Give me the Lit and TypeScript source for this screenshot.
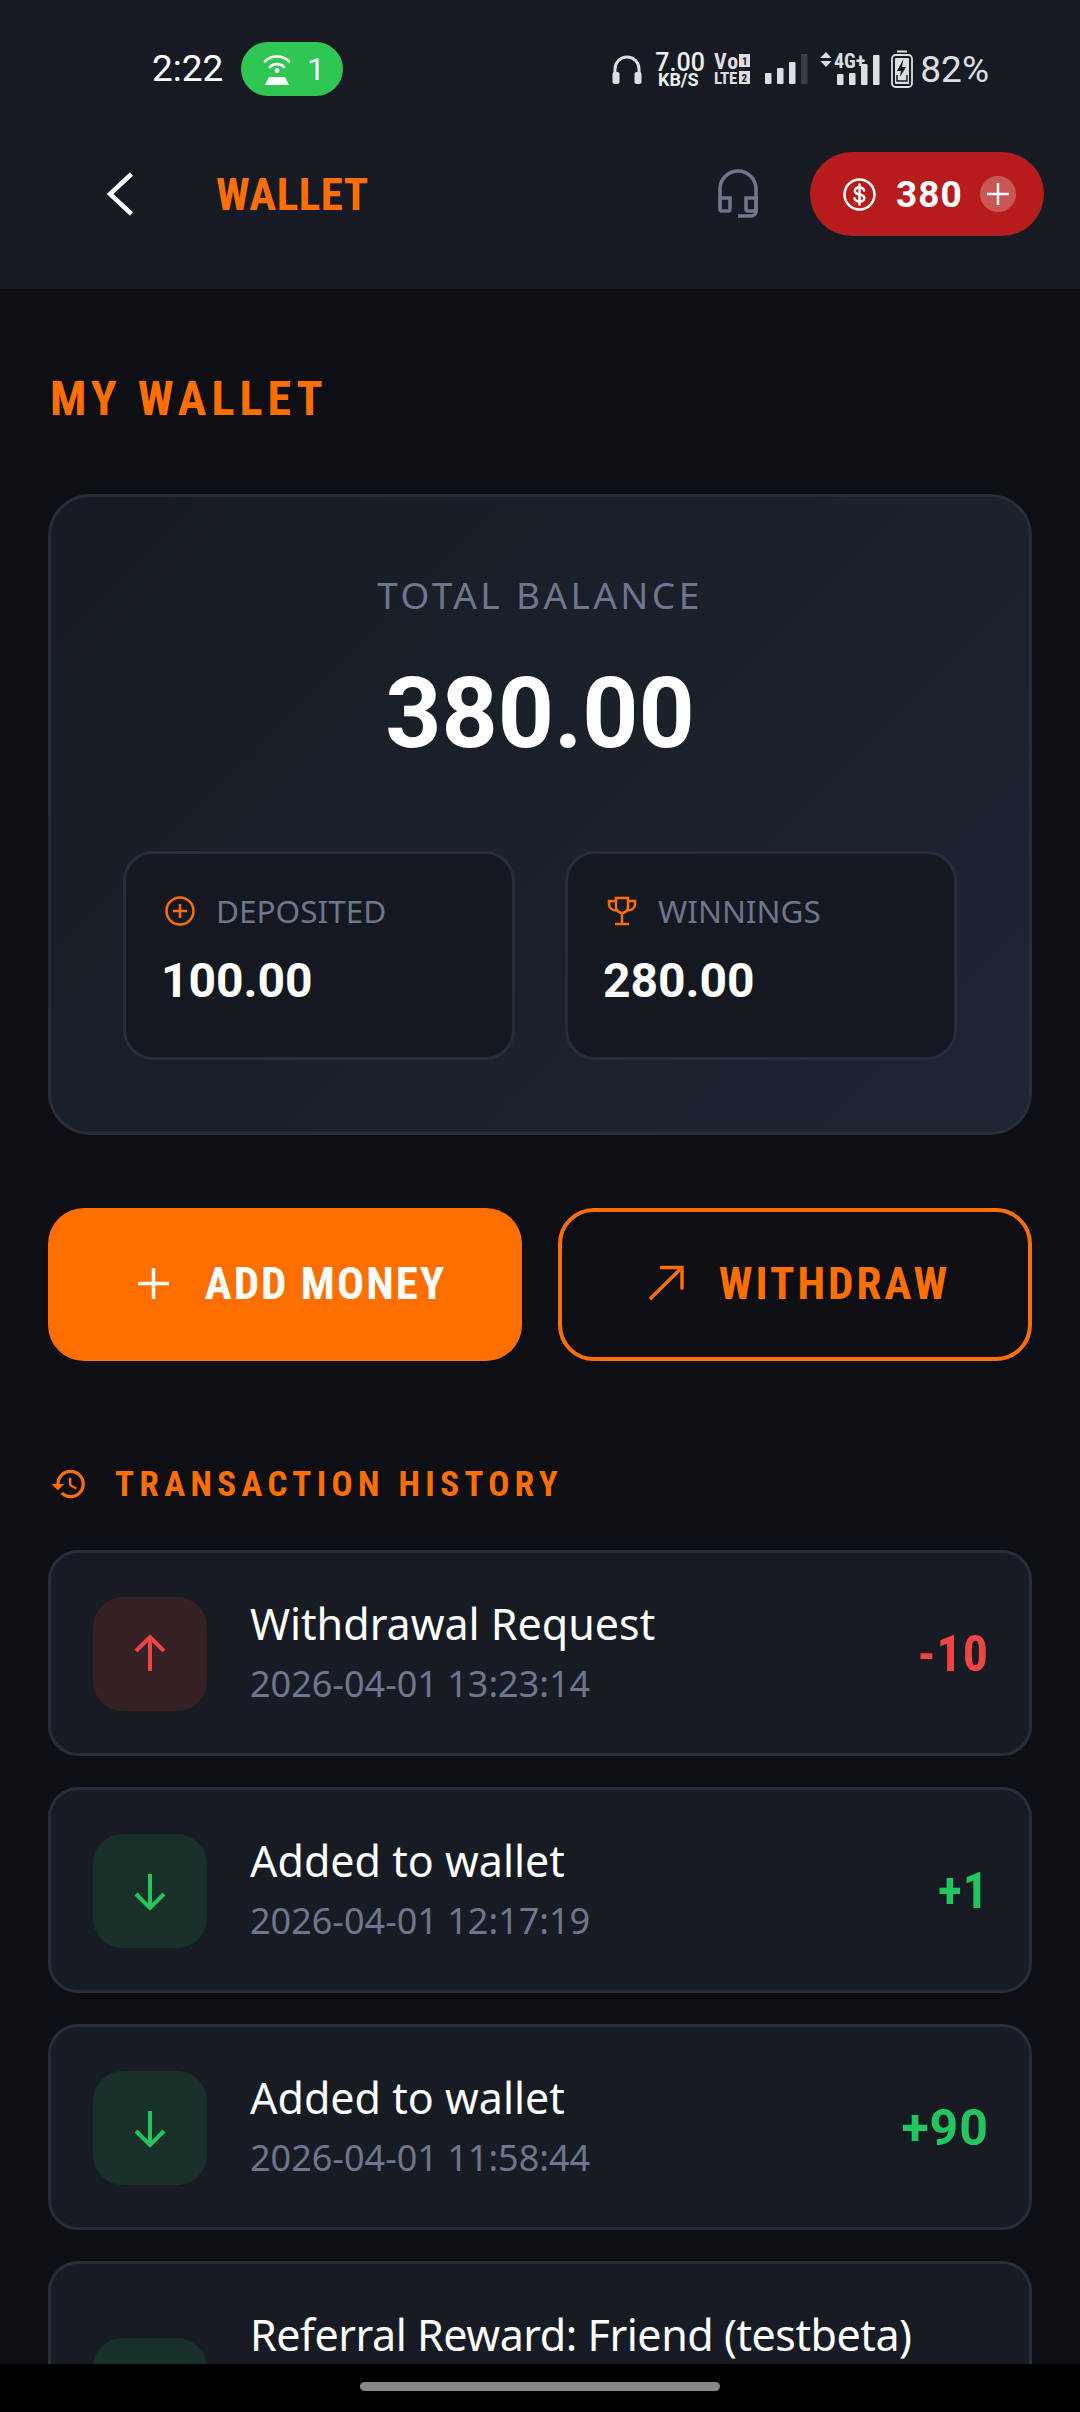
import { LitElement, css, html, svg } from "lit";
import { customElement } from "lit/decorators.js";

type Tx = { title: string; date: string; amount: string; kind: "in" | "out"; tight?: boolean; tall?: boolean };

const transactions: Tx[] = [
  { title: "Withdrawal Request", date: "2026-04-01 13:23:14", amount: "-10", kind: "out", tight: true },
  { title: "Added to wallet", date: "2026-04-01 12:17:19", amount: "+1", kind: "in", tight: true },
  { title: "Added to wallet", date: "2026-04-01 11:58:44", amount: "+90", kind: "in" },
  { title: "Referral Reward: Friend (testbeta)", date: "2026-04-01 11:40:02", amount: "+50", kind: "in", tall: true },
];

const bars = (list: [number, number, string?][]) =>
  list.map(([x, top, fill]) => svg`<rect x=${x} y=${top} width="6.5" height=${30 - top} rx="1" fill=${fill ?? "#dcdee0"}></rect>`);

@customElement("app-root")
export class AppRoot extends LitElement {
  static styles = css`
    :host {
      display: block;
      width: 1080px;
      height: 2412px;
      overflow: hidden;
      background: #0d0f13;
      color: #fff;
      font-family: "Noto Sans", sans-serif;
    }
    .page {
      height: 2412px;
      display: flex;
      flex-direction: column;
    }
    svg {
      display: block;
      flex: none;
      overflow: visible;
    }

    /* top bars */
    header {
      flex: none;
      height: 289px;
      background: #161b23;
    }
    .status {
      height: 118px;
      padding: 20px 91px 0 152px;
      box-sizing: border-box;
      display: flex;
      align-items: center;
      font-family: Roboto, sans-serif;
    }
    .time {
      font-size: 37px;
      line-height: 98px;
      width: 89px;
    }
    .hotspot {
      width: 102px;
      height: 54px;
      border-radius: 27px;
      background: #30c653;
      display: flex;
      align-items: center;
      gap: 15px;
      padding-left: 21px;
      box-sizing: border-box;
      font-size: 32px;
    }
    .status-right {
      margin-left: auto;
      display: flex;
      align-items: center;
      color: #dcdee0;
    }
    .speed {
      width: 46px;
      margin: 0 13px;
      text-align: center;
      line-height: 1;
      font-weight: 500;
      color: #eceef0;
    }
    .speed b {
      display: block;
      font-size: 25px;
      font-weight: 500;
      height: 21px;
    }
    .speed span {
      display: block;
      font-size: 18px;
      font-weight: 700;
      font-stretch: 90%;
    }
    .pct {
      font-size: 37px;
      margin-left: 7px;
    }
    .appbar {
      height: 84px;
      margin-top: 34px;
      padding: 0 36px 0 107px;
      display: flex;
      align-items: center;
    }
    .heading {
      font-family: Roboto, sans-serif;
      font-weight: 700;
      font-stretch: 85%;
    }
    .appbar h1 {
      margin: 0 0 0 83px;
      font-size: 45px;
      letter-spacing: 0.5px;
      color: #ff6f00;
    }
    .support {
      margin-left: auto;
      margin-right: 52px;
    }
    .coins {
      width: 234px;
      height: 84px;
      border-radius: 42px;
      background: #b71c1c;
      display: flex;
      align-items: center;
      padding-left: 33px;
      box-sizing: border-box;
      font-family: Roboto, sans-serif;
      font-weight: 700;
      font-size: 37px;
      letter-spacing: 1px;
    }
    .coins span {
      margin: 0 17px 0 20px;
    }

    /* wallet */
    main {
      flex: 1;
      min-height: 0;
      overflow: hidden;
      padding: 80px 48px 0;
    }
    .title {
      margin: 0;
      padding-left: 2px;
      font-size: 48px;
      line-height: 60px;
      letter-spacing: 5px;
      color: #ff6f00;
    }
    .balance {
      margin-top: 65px;
      padding: 76px 72px 72px;
      border: 3px solid #262c3a;
      border-radius: 42px;
      background: linear-gradient(135deg, #161b23, #1f2531);
      text-align: center;
    }
    .balance-label {
      font-size: 37px;
      line-height: 44px;
      letter-spacing: 3.4px;
      color: #6e758c;
    }
    .balance-value {
      margin-top: 37px;
      font-family: Roboto, sans-serif;
      font-weight: 700;
      font-size: 98px;
      line-height: 120px;
    }
    .split {
      margin-top: 77px;
      display: grid;
      grid-template-columns: 1fr 1fr;
      gap: 50px;
      text-align: left;
    }
    .stat {
      height: 209px;
      box-sizing: border-box;
      padding: 37px 39px 0;
      border: 3px solid #262c3a;
      border-radius: 30px;
      background: #141820;
    }
    .stat-label {
      display: flex;
      align-items: center;
      gap: 21px;
      height: 40px;
      font-size: 31.5px;
      line-height: 34px;
      color: #6e758c;
    }
    .stat-value {
      margin-top: 20px;
      margin-left: -4px;
      font-family: Roboto, sans-serif;
      font-weight: 700;
      font-size: 48px;
      line-height: 60px;
    }

    .actions {
      margin-top: 73px;
      display: grid;
      grid-template-columns: 1fr 1fr;
      gap: 36px;
    }
    .btn {
      height: 153px;
      box-sizing: border-box;
      padding: 0 0 3px 9px;
      border-radius: 36px;
      display: flex;
      align-items: center;
      justify-content: center;
      gap: 36px;
      font-size: 45px;
      letter-spacing: 3px;
      color: #ff6f00;
      border: 4px solid #ff6f00;
    }
    .btn.primary {
      padding-left: 14px;
      background: #ff6f00;
      color: #fff;
      border: none;
      letter-spacing: 2px;
    }

    .history-head {
      margin-top: 103px;
      height: 40px;
      display: flex;
      align-items: center;
      gap: 27px;
      color: #ff6f00;
      font-size: 35px;
      letter-spacing: 5.4px;
    }
    .rows {
      margin-top: 46px;
      display: flex;
      flex-direction: column;
      gap: 31px;
    }
    .row {
      display: flex;
      align-items: center;
      box-sizing: border-box;
      min-height: 206px;
      padding: 2px 40px 0 42px;
      border: 3px solid #262c3a;
      border-radius: 30px;
      background: #171c24;
    }
    .row.tall {
      min-height: 266px;
    }
    .row-icon {
      flex: none;
      width: 114px;
      height: 114px;
      border-radius: 30px;
      display: flex;
      align-items: center;
      justify-content: center;
    }
    .out .row-icon {
      background: #352024;
      color: #ef4444;
    }
    .in .row-icon {
      background: #183029;
      color: #22c55e;
    }
    .row-text {
      flex: 1;
      margin-left: 43px;
      min-width: 0;
    }
    .row-title {
      font-size: 43px;
      line-height: 60px;
      white-space: nowrap;
    }
    .tall .row-title {
      min-height: 120px;
      letter-spacing: -0.45px;
    }
    .row-date {
      font-size: 36px;
      line-height: 60px;
      color: #6e758c;
    }
    .row-amount {
      font-family: Roboto, sans-serif;
      font-weight: 700;
      font-stretch: 90%;
      font-size: 50px;
      letter-spacing: 1px;
    }
    .row-amount.tight {
      font-stretch: 75%;
    }
    .out .row-amount {
      color: #ef4444;
    }
    .in .row-amount {
      color: #22c55e;
    }

    /* android gesture bar */
    .gesture {
      flex: none;
      height: 48px;
      background: #000;
      display: flex;
      justify-content: center;
      padding-top: 18px;
      box-sizing: border-box;
    }
    .gesture i {
      width: 360px;
      height: 9px;
      border-radius: 5px;
      background: #888;
    }
  `;

  private renderStatus() {
    return html`<div class="status">
      <div class="time">2:22</div>
      <div class="hotspot">
        <svg width="30" height="32" viewBox="0 0 30 32" fill="none" stroke="#fff" stroke-width="2.6" stroke-linecap="round">
          <path d="M3 8.5a17 17 0 0 1 24 0"></path>
          <path d="M8 14a10 10 0 0 1 14 0"></path>
          <circle cx="15" cy="17.5" r="2.4" fill="#fff" stroke="none"></circle>
          <path d="M7 24h16l4 8H3z" fill="#fff" stroke="none"></path>
        </svg>
        <span>1</span>
      </div>
      <div class="status-right">
        <svg width="30" height="29" viewBox="0 0 30 29" fill="none">
          <path d="M3 20v-6a12 12 0 0 1 24 0v6" stroke="#dcdee0" stroke-width="3"></path>
          <rect x="0.5" y="17" width="7" height="12" rx="2" fill="#dcdee0"></rect>
          <rect x="22.5" y="17" width="7" height="12" rx="2" fill="#dcdee0"></rect>
        </svg>
        <div class="speed"><b>7.00</b><span>KB/S</span></div>
        <svg width="36" height="34" viewBox="0 0 36 34" font-family="Roboto, sans-serif" font-weight="700" font-stretch="75%" fill="#dcdee0">
          <text x="0" y="17" font-size="22" letter-spacing="1">Vo</text>
          <text x="0" y="32" font-size="17" letter-spacing="-0.3">LTE</text>
          <rect x="25" y="2" width="11" height="13" fill="#dcdee0"></rect>
          <rect x="25" y="19" width="11" height="13" fill="#dcdee0"></rect>
          <text x="28" y="13" font-size="11" fill="#161b23">1</text>
          <text x="27.5" y="30" font-size="11" fill="#161b23">2</text>
        </svg>
        <svg style="margin-left:15px" width="44" height="30" viewBox="0 0 44 30">
          ${bars([[0, 19], [12, 14], [24, 8], [36, 0, "#3a3f47"]])}
        </svg>
        <svg style="margin-left:11px" width="61" height="34" viewBox="0 0 61 34" fill="#dcdee0">
          <path d="M6 0l5.5 6H0zM6 15L0.5 9H11.5z"></path>
          <text x="14" y="16" font-family="Roboto, sans-serif" font-weight="700" font-stretch="75%" font-size="20">4G+</text>
          <g transform="translate(17 3)">${bars([[0, 19], [12, 18], [24, 9], [36, 0]])}</g>
        </svg>
        <svg style="margin-left:10px" width="22" height="38" viewBox="0 0 22 38" fill="none">
          <rect x="6" y="0.5" width="10" height="2" fill="#dcdee0"></rect>
          <rect x="1" y="5" width="20" height="32" rx="3.5" stroke="#dcdee0" stroke-width="1.8"></rect>
          <rect x="4" y="8" width="14" height="26" rx="1" fill="#dcdee0"></rect>
          <path d="M12.5 9L6 21h4l-1 6 6-10h-4z" fill="#161b23"></path>
          <path d="M6 25v6h10v-6" stroke="#161b23" stroke-width="1.5"></path>
        </svg>
        <div class="pct">82%</div>
      </div>
    </div>`;
  }

  private renderAppbar() {
    return html`<div class="appbar">
      <svg width="26" height="44" viewBox="0 0 26 44" fill="none" stroke="#fff" stroke-width="4.5">
        <path d="M24.5 2L3 22l21.5 20"></path>
      </svg>
      <h1 class="heading">WALLET</h1>
      <svg class="support" width="40" height="50" viewBox="0 0 40 50" fill="none" stroke="#6e758c" stroke-width="3.6">
        <path d="M2 38V20a18 18 0 0 1 36 0v22a5 5 0 0 1-5 5H20"></path>
        <path d="M2 29h10v11a2 2 0 0 1-2 2H4a2 2 0 0 1-2-2z"></path>
        <path d="M38 29H28v11a2 2 0 0 0 2 2h8z"></path>
      </svg>
      <div class="coins">
        <svg width="33" height="33" viewBox="0 0 33 33" fill="none" stroke="#fff" stroke-width="2.5" stroke-linecap="round">
          <circle cx="16.5" cy="16.5" r="15"></circle>
          <path d="M21 12.5c-.4-2-2.2-3-4.5-3-2.7 0-4.7 1.3-4.7 3.5 0 5 9.5 2.2 9.5 7 0 2.2-2 3.500-4.800 3.500-2.600 0-4.500-1.100-5-3.200"></path>
          <path d="M16.5 6.5v20"></path>
        </svg>
        <span>380</span>
        <svg width="36" height="36" viewBox="0 0 36 36" fill="none" stroke="#fff" stroke-width="2.5">
          <circle cx="18" cy="18" r="18" fill="#fff" fill-opacity="0.25" stroke="none"></circle>
          <path d="M18 7v22M7 18h22"></path>
        </svg>
      </div>
    </div>`;
  }

  private renderRow(tx: Tx) {
    const arrow = tx.kind === "out" ? "M18 36V2M4 16L18 2l14 14" : "M18 2v34M4 22l14 14 14-14";
    return html`<div class="row ${tx.kind} ${tx.tall ? "tall" : ""}">
      <div class="row-icon">
        <svg width="36" height="38" viewBox="0 0 36 38" fill="none" stroke="currentColor" stroke-width="4">
          <path d=${arrow}></path>
        </svg>
      </div>
      <div class="row-text">
        <div class="row-title">${tx.title}</div>
        <div class="row-date">${tx.date}</div>
      </div>
      <div class="row-amount ${tx.tight ? "tight" : ""}">${tx.amount}</div>
    </div>`;
  }

  render() {
    return html`<div class="page">
      <header>${this.renderStatus()} ${this.renderAppbar()}</header>
      <main>
        <h2 class="title heading">MY WALLET</h2>
        <section class="balance">
          <div class="balance-label">TOTAL BALANCE</div>
          <div class="balance-value">380.00</div>
          <div class="split">
            <div class="stat">
              <div class="stat-label">
                <svg width="30" height="30" viewBox="0 0 30 30" fill="none" stroke="#ff6f00" stroke-width="2.5">
                  <circle cx="15" cy="15" r="13.5"></circle>
                  <path d="M15 8v14M8 15h14"></path>
                </svg>
                DEPOSITED
              </div>
              <div class="stat-value">100.00</div>
            </div>
            <div class="stat">
              <div class="stat-label">
                <svg width="30" height="30" viewBox="0 0 30 30" fill="none" stroke="#ff6f00" stroke-width="2.5">
                  <path d="M9 2h12v9a6 6 0 0 1-12 0z"></path>
                  <path d="M9 5H2v3a6 6 0 0 0 7.5 6M21 5h7v3a6 6 0 0 1-7.5 6M15 17v10M8 28h14"></path>
                </svg>
                WINNINGS
              </div>
              <div class="stat-value">280.00</div>
            </div>
          </div>
        </section>
        <div class="actions">
          <div class="btn primary heading">
            <svg width="31" height="31" viewBox="0 0 31 31" stroke="#fff" stroke-width="3.5"><path d="M15.5 0v31M0 15.5h31"></path></svg>
            ADD MONEY
          </div>
          <div class="btn heading">
            <svg width="34" height="34" viewBox="0 0 34 34" fill="none" stroke="#ff6f00" stroke-width="3.5"><path d="M1 33L33 1.5M11 1.5h22v22"></path></svg>
            WITHDRAW
          </div>
        </div>
        <div class="history-head heading">
          <svg style="margin-left:2px" width="38" height="38" viewBox="0 0 24 24" fill="#ff6f00">
            <path d="M13 3a9 9 0 0 0-9 9H1l3.89 3.89.07.14L9 12H6c0-3.87 3.13-7 7-7s7 3.13 7 7-3.13 7-7 7c-1.93 0-3.68-.79-4.94-2.06l-1.42 1.42A8.954 8.954 0 0 0 13 21a9 9 0 0 0 0-18zm-1 5v5l4.28 2.54.72-1.21-3.5-2.08V8H12z"></path>
          </svg>
          TRANSACTION HISTORY
        </div>
        <div class="rows">${transactions.map((tx) => this.renderRow(tx))}</div>
      </main>
      <div class="gesture"><i></i></div>
    </div>`;
  }
}
